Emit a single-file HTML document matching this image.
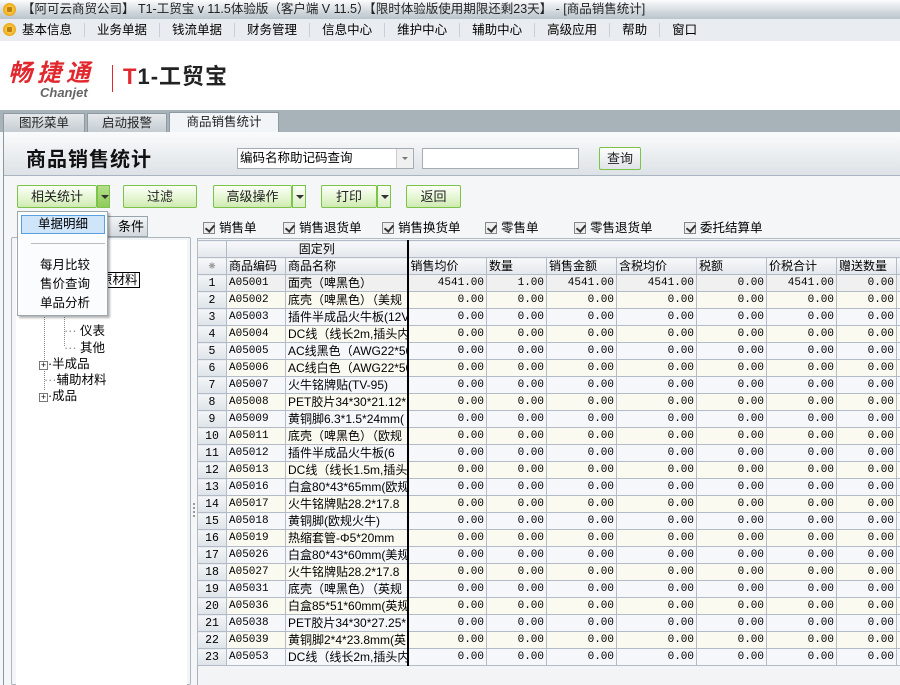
<!DOCTYPE html>
<html><head><meta charset="utf-8">
<style>
*{margin:0;padding:0;box-sizing:border-box}
body{width:900px;height:685px;overflow:hidden;position:relative;background:#f4f6f8;font-family:"Liberation Sans","Noto Sans CJK SC","WenQuanYi Zen Hei",sans-serif;font-size:12px;color:#000}
.a{position:absolute}
.coin{position:absolute;width:13px;height:13px;border-radius:50%;background:radial-gradient(circle,#ffe680 0,#f0b020 60%,#c88a10 100%);}
.coin:after{content:"";position:absolute;left:4px;top:4px;width:5px;height:5px;background:#c08010;border-radius:1px}
#title{left:0;top:0;width:900px;height:19px;background:linear-gradient(#fbfcfd,#d2d9de 60%,#b9c4cb);font-size:12.5px;line-height:19px;color:#222;white-space:nowrap}
#menu{left:0;top:19px;width:900px;height:22px;background:#e9ecf0;line-height:22px;font-size:12.5px;white-space:nowrap}
#menu span{display:inline-block;padding:0 12px;border-right:1px solid #c9cfd5;line-height:14px}
#logo{left:0;top:41px;width:900px;height:69px;background:#fff}
#tabs{left:0;top:110px;width:900px;height:22px;background:#a8b2b9}
.tab{position:absolute;top:3px;height:19px;background:linear-gradient(#e4e8eb,#c4ccd2);border:1px solid #8f99a1;border-bottom:none;text-align:center;line-height:18px;font-size:12.5px;color:#222}
.btn{position:absolute;height:23px;border:1px solid #7cc34a;border-radius:2px;background:linear-gradient(#fcfff8,#e3f5cf 60%,#cfeab1);text-align:center;line-height:21px;font-size:13px;color:#222}
.arr{position:absolute;height:23px;border:1px solid #7cc34a;background:linear-gradient(#fcfff8,#d9efc2);}
.arr:after{content:"";position:absolute;left:3px;top:9px;border:4px solid transparent;border-top:4px solid #333}
.cb{position:absolute;top:217px;font-size:12.5px;white-space:nowrap}
.cb i{display:inline-block;width:12px;height:12px;border:1px solid #888;background:#eee;vertical-align:-2px;margin-right:4px;position:relative}
.cb i:after{content:"";position:absolute;left:3px;top:0px;width:4px;height:7px;border:solid #333;border-width:0 2px 2px 0;transform:rotate(40deg)}
table{border-collapse:collapse;table-layout:fixed;position:absolute;left:197px;top:240px;width:740px}
td{border:1px solid #b3bcc6;height:17px;padding:0 2px;white-space:nowrap;overflow:hidden;font-size:12px;line-height:15px}
td.n{text-align:right;font-family:"Liberation Mono",monospace;font-size:11px}
td.r{text-align:center;background:linear-gradient(#f4f6f8,#dde3e8);font-family:"Liberation Mono",monospace;font-size:11.5px}
td.c{font-family:"Liberation Mono",monospace;font-size:11px}
tr.h td{background:linear-gradient(#f7f8fa,#e3e7ec);}
td.tk{border-right:2px solid #000}
tr.o td{background:#f5f7fb}
tr.e td{background:#fbfaf1}
tr.s td{background:#f0f0f0}
tr.o td.r,tr.e td.r,tr.s td.r{background:linear-gradient(#f4f6f8,#dde3e8)}
.tree{position:absolute;font-size:12.5px;white-space:nowrap}
.pm{display:inline-block;width:9px;height:9px;border:1px solid #777;font-size:9px;line-height:7px;text-align:center;background:#fff}
</style></head><body>
<div id="title" class="a"><div class="coin" style="left:3px;top:3px"></div><span style="position:absolute;left:22px">【阿可云商贸公司】 T1-工贸宝 v 11.5体验版（客户端 V 11.5）【限时体验版使用期限还剩23天】 - [商品销售统计]</span></div>
<div id="menu" class="a"><div class="coin" style="left:3px;top:4px"></div><div style="position:absolute;left:10px;top:0"><span>基本信息</span><span>业务单据</span><span>钱流单据</span><span>财务管理</span><span>信息中心</span><span>维护中心</span><span>辅助中心</span><span>高级应用</span><span>帮助</span><span style="border:none">窗口</span></div></div>
<div id="logo" class="a">
<div class="a" style="left:8px;top:20px;font-size:24px;font-weight:bold;font-style:italic;color:#e0282e;letter-spacing:5px;line-height:26px">畅捷通</div>
<div class="a" style="left:40px;top:44px;font-size:13px;font-style:italic;font-weight:bold;color:#666">Chanjet</div>
<div class="a" style="left:112px;top:24px;width:1px;height:27px;background:#e0282e"></div>
<div class="a" style="left:123px;top:23px;font-size:22px;font-weight:bold;line-height:26px;color:#222;letter-spacing:1px"><span style="color:#e0282e">T</span>1-工贸宝</div>
</div>
<div id="tabs" class="a">
<div class="tab" style="left:3px;width:82px">图形菜单</div>
<div class="tab" style="left:87px;width:80px">启动报警</div>
<div class="tab" style="left:169px;width:110px;background:#f2f5f7;top:2px;height:20px">商品销售统计</div>
</div>
<div class="a" style="left:3px;top:132px;width:897px;height:553px;border-left:1px solid #8d979f;background:#f4f6f8"></div>
<div class="a" style="left:4px;top:132px;width:896px;height:44px;background:linear-gradient(#fafbfc,#dde2e6);border-bottom:1px solid #a9b6c2"></div>
<div class="a" style="left:26px;top:143px;font-size:20px;font-weight:bold;color:#111;letter-spacing:1px">商品销售统计</div>
<div class="a" style="left:237px;top:148px;width:177px;height:21px;border:1px solid #a5acb3;background:#fff;font-size:12.5px;line-height:19px;padding-left:2px">编码名称助记码查询<div class="a" style="right:0;top:0;width:17px;height:19px;border-left:1px solid #ccc;background:#f0f0f0"><div class="a" style="left:5px;top:8px;border:3px solid transparent;border-top:3px solid #777"></div></div></div>
<div class="a" style="left:422px;top:148px;width:157px;height:21px;border:1px solid #a5acb3;background:#fff"></div>
<div class="btn" style="left:599px;top:147px;width:42px;height:23px;background:linear-gradient(#fdfdfd,#e0e4e8)">查询</div>
<div class="btn" style="left:17px;top:185px;width:80px">相关统计</div><div class="arr" style="left:97px;top:185px;width:13px;background:linear-gradient(#b4df8a,#8fcb5a)"></div>
<div class="btn" style="left:123px;top:185px;width:74px">过滤</div>
<div class="btn" style="left:213px;top:185px;width:79px">高级操作</div><div class="arr" style="left:292px;top:185px;width:14px"></div>
<div class="btn" style="left:321px;top:185px;width:56px">打印</div><div class="arr" style="left:377px;top:185px;width:14px"></div>
<div class="btn" style="left:406px;top:185px;width:55px">返回</div>
<div class="cb" style="left:203px"><i></i>销售单</div>
<div class="cb" style="left:283px"><i></i>销售退货单</div>
<div class="cb" style="left:382px"><i></i>销售换货单</div>
<div class="cb" style="left:485px"><i></i>零售单</div>
<div class="cb" style="left:574px"><i></i>零售退货单</div>
<div class="cb" style="left:684px"><i></i>委托结算单</div>
<div class="a" style="left:197px;top:238px;width:703px;height:1px;background:#b0bac3"></div>
<div class="a" style="left:197px;top:239px;width:703px;height:446px;background:#f2f4f6;border-left:1px solid #a9b3bc"></div>
<div class="a" style="left:100px;top:216px;width:48px;height:21px;border:1px solid #9aa4ad;background:linear-gradient(#f2f4f6,#d3d9de);font-size:13px;line-height:20px;padding-left:17px">条件</div>
<div class="a" style="left:11px;top:237px;width:180px;height:448px;border:1px solid #aeb6bd;border-radius:2px;background:#f3f5f7"></div>
<div class="a" style="left:16px;top:240px;width:171px;height:445px;background:#fff"></div>
<div class="a" style="left:193px;top:503px;width:2px;height:14px;border-left:2px dotted #999"></div>
<div class="tree" style="left:98px;top:272px;border:1px solid #000;padding:0 1px;line-height:14px">原材料</div>
<div class="a" style="left:44px;top:290px;height:100px;border-left:1px dotted #888"></div>
<div class="a" style="left:64px;top:290px;height:56px;border-left:1px dotted #888"></div>
<div class="tree" style="left:64px;top:320px"><span style="color:#888">···</span> 仪表</div>
<div class="tree" style="left:64px;top:337px"><span style="color:#888">···</span> 其他</div>
<div class="tree" style="left:39px;top:353px"><span class="pm">+</span>·半成品</div>
<div class="tree" style="left:44px;top:369px"><span style="color:#888">···</span>辅助材料</div>
<div class="tree" style="left:39px;top:385px"><span class="pm">+</span>·成品</div>
<div class="a" style="left:17px;top:211px;width:91px;height:105px;background:#fbfcfd;border:1px solid #9ea6ae;box-shadow:2px 2px 2px rgba(0,0,0,.3)">
<div class="a" style="left:3px;top:3px;width:84px;height:19px;border:1px solid #5aa0e0;background:#cfe5fa;text-align:center;line-height:17px;font-size:12.5px">单据明细</div>
<div class="a" style="left:13px;top:31px;width:74px;height:1px;background:#bbb"></div>
<div class="a" style="left:22px;top:44px;font-size:12.5px;line-height:19px">每月比较<br>售价查询<br>单品分析</div>
</div>
<table>
<colgroup><col style="width:29px"><col style="width:59px"><col style="width:122px"><col style="width:79px"><col style="width:60px"><col style="width:70px"><col style="width:80px"><col style="width:70px"><col style="width:70px"><col style="width:60px"><col style="width:41px"></colgroup>
<tr class="h"><td></td><td colspan="2" class="tk" style="text-align:center">固定列</td><td colspan="8" style="border-left:none"></td></tr>
<tr class="h"><td style="text-align:center;color:#999">⁕</td><td>商品编码</td><td class="tk">商品名称</td><td>销售均价</td><td>数量</td><td>销售金额</td><td>含税均价</td><td>税额</td><td>价税合计</td><td>赠送数量</td><td></td></tr>
<tr class="s"><td class="r">1</td><td class="c">A05001</td><td class="tk">面壳（啤黑色）</td><td class="n">4541.00</td><td class="n">1.00</td><td class="n">4541.00</td><td class="n">4541.00</td><td class="n">0.00</td><td class="n">4541.00</td><td class="n">0.00</td><td></td></tr>
<tr class="e"><td class="r">2</td><td class="c">A05002</td><td class="tk">底壳（啤黑色）（美规</td><td class="n">0.00</td><td class="n">0.00</td><td class="n">0.00</td><td class="n">0.00</td><td class="n">0.00</td><td class="n">0.00</td><td class="n">0.00</td><td></td></tr>
<tr class="o"><td class="r">3</td><td class="c">A05003</td><td class="tk">插件半成品火牛板(12V</td><td class="n">0.00</td><td class="n">0.00</td><td class="n">0.00</td><td class="n">0.00</td><td class="n">0.00</td><td class="n">0.00</td><td class="n">0.00</td><td></td></tr>
<tr class="e"><td class="r">4</td><td class="c">A05004</td><td class="tk">DC线（线长2m,插头内</td><td class="n">0.00</td><td class="n">0.00</td><td class="n">0.00</td><td class="n">0.00</td><td class="n">0.00</td><td class="n">0.00</td><td class="n">0.00</td><td></td></tr>
<tr class="o"><td class="r">5</td><td class="c">A05005</td><td class="tk">AC线黑色（AWG22*50mm</td><td class="n">0.00</td><td class="n">0.00</td><td class="n">0.00</td><td class="n">0.00</td><td class="n">0.00</td><td class="n">0.00</td><td class="n">0.00</td><td></td></tr>
<tr class="e"><td class="r">6</td><td class="c">A05006</td><td class="tk">AC线白色（AWG22*50mm</td><td class="n">0.00</td><td class="n">0.00</td><td class="n">0.00</td><td class="n">0.00</td><td class="n">0.00</td><td class="n">0.00</td><td class="n">0.00</td><td></td></tr>
<tr class="o"><td class="r">7</td><td class="c">A05007</td><td class="tk">火牛铭牌贴(TV-95)</td><td class="n">0.00</td><td class="n">0.00</td><td class="n">0.00</td><td class="n">0.00</td><td class="n">0.00</td><td class="n">0.00</td><td class="n">0.00</td><td></td></tr>
<tr class="e"><td class="r">8</td><td class="c">A05008</td><td class="tk">PET胶片34*30*21.12*</td><td class="n">0.00</td><td class="n">0.00</td><td class="n">0.00</td><td class="n">0.00</td><td class="n">0.00</td><td class="n">0.00</td><td class="n">0.00</td><td></td></tr>
<tr class="o"><td class="r">9</td><td class="c">A05009</td><td class="tk">黄铜脚6.3*1.5*24mm(</td><td class="n">0.00</td><td class="n">0.00</td><td class="n">0.00</td><td class="n">0.00</td><td class="n">0.00</td><td class="n">0.00</td><td class="n">0.00</td><td></td></tr>
<tr class="e"><td class="r">10</td><td class="c">A05011</td><td class="tk">底壳（啤黑色）（欧规</td><td class="n">0.00</td><td class="n">0.00</td><td class="n">0.00</td><td class="n">0.00</td><td class="n">0.00</td><td class="n">0.00</td><td class="n">0.00</td><td></td></tr>
<tr class="o"><td class="r">11</td><td class="c">A05012</td><td class="tk">插件半成品火牛板(6</td><td class="n">0.00</td><td class="n">0.00</td><td class="n">0.00</td><td class="n">0.00</td><td class="n">0.00</td><td class="n">0.00</td><td class="n">0.00</td><td></td></tr>
<tr class="e"><td class="r">12</td><td class="c">A05013</td><td class="tk">DC线（线长1.5m,插头</td><td class="n">0.00</td><td class="n">0.00</td><td class="n">0.00</td><td class="n">0.00</td><td class="n">0.00</td><td class="n">0.00</td><td class="n">0.00</td><td></td></tr>
<tr class="o"><td class="r">13</td><td class="c">A05016</td><td class="tk">白盒80*43*65mm(欧规</td><td class="n">0.00</td><td class="n">0.00</td><td class="n">0.00</td><td class="n">0.00</td><td class="n">0.00</td><td class="n">0.00</td><td class="n">0.00</td><td></td></tr>
<tr class="e"><td class="r">14</td><td class="c">A05017</td><td class="tk">火牛铭牌贴28.2*17.8</td><td class="n">0.00</td><td class="n">0.00</td><td class="n">0.00</td><td class="n">0.00</td><td class="n">0.00</td><td class="n">0.00</td><td class="n">0.00</td><td></td></tr>
<tr class="o"><td class="r">15</td><td class="c">A05018</td><td class="tk">黄铜脚(欧规火牛)</td><td class="n">0.00</td><td class="n">0.00</td><td class="n">0.00</td><td class="n">0.00</td><td class="n">0.00</td><td class="n">0.00</td><td class="n">0.00</td><td></td></tr>
<tr class="e"><td class="r">16</td><td class="c">A05019</td><td class="tk">热缩套管-Φ5*20mm</td><td class="n">0.00</td><td class="n">0.00</td><td class="n">0.00</td><td class="n">0.00</td><td class="n">0.00</td><td class="n">0.00</td><td class="n">0.00</td><td></td></tr>
<tr class="o"><td class="r">17</td><td class="c">A05026</td><td class="tk">白盒80*43*60mm(美规</td><td class="n">0.00</td><td class="n">0.00</td><td class="n">0.00</td><td class="n">0.00</td><td class="n">0.00</td><td class="n">0.00</td><td class="n">0.00</td><td></td></tr>
<tr class="e"><td class="r">18</td><td class="c">A05027</td><td class="tk">火牛铭牌贴28.2*17.8</td><td class="n">0.00</td><td class="n">0.00</td><td class="n">0.00</td><td class="n">0.00</td><td class="n">0.00</td><td class="n">0.00</td><td class="n">0.00</td><td></td></tr>
<tr class="o"><td class="r">19</td><td class="c">A05031</td><td class="tk">底壳（啤黑色）（英规</td><td class="n">0.00</td><td class="n">0.00</td><td class="n">0.00</td><td class="n">0.00</td><td class="n">0.00</td><td class="n">0.00</td><td class="n">0.00</td><td></td></tr>
<tr class="e"><td class="r">20</td><td class="c">A05036</td><td class="tk">白盒85*51*60mm(英规</td><td class="n">0.00</td><td class="n">0.00</td><td class="n">0.00</td><td class="n">0.00</td><td class="n">0.00</td><td class="n">0.00</td><td class="n">0.00</td><td></td></tr>
<tr class="o"><td class="r">21</td><td class="c">A05038</td><td class="tk">PET胶片34*30*27.25*</td><td class="n">0.00</td><td class="n">0.00</td><td class="n">0.00</td><td class="n">0.00</td><td class="n">0.00</td><td class="n">0.00</td><td class="n">0.00</td><td></td></tr>
<tr class="e"><td class="r">22</td><td class="c">A05039</td><td class="tk">黄铜脚2*4*23.8mm(英</td><td class="n">0.00</td><td class="n">0.00</td><td class="n">0.00</td><td class="n">0.00</td><td class="n">0.00</td><td class="n">0.00</td><td class="n">0.00</td><td></td></tr>
<tr class="o"><td class="r">23</td><td class="c">A05053</td><td class="tk">DC线（线长2m,插头内</td><td class="n">0.00</td><td class="n">0.00</td><td class="n">0.00</td><td class="n">0.00</td><td class="n">0.00</td><td class="n">0.00</td><td class="n">0.00</td><td></td></tr>
</table>
</body></html>
